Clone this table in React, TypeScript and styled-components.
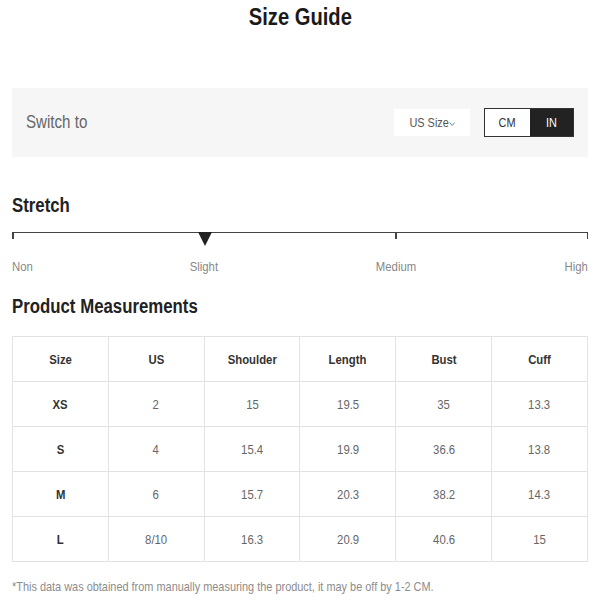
import React from "react";
import styled, { createGlobalStyle } from "styled-components";

const Global = createGlobalStyle`
  html, body { margin: 0; padding: 0; background: #fff; }
  body { font-family: "Liberation Sans", Arial, sans-serif; color: #222; }
`;

/* Narrow text: emulates the condensed face of the reference */
const Cond = styled.span<{ $origin?: string }>`
  display: inline-block;
  white-space: nowrap;
  transform: scaleX(0.84);
  transform-origin: ${(p) => p.$origin || "center"};
`;

const Page = styled.div`
  width: 576px;
  margin: 0 12px;
`;

const Title = styled.h1`
  margin: 0;
  padding-top: 4px;
  height: 88px;
  box-sizing: border-box;
  text-align: center;
  font-size: 24px;
  line-height: 26px;
  font-weight: 700;
  color: #1a1a1a;
`;

const SwitchBar = styled.div`
  height: 69px;
  background: #f6f6f6;
  display: flex;
  align-items: center;
  padding: 0 14px 0 14px;
  box-sizing: border-box;
`;

const SwitchLabel = styled.span`
  flex: 1;
  font-size: 18px;
  color: #666;
`;

const Dropdown = styled.div`
  width: 76px;
  height: 27px;
  background: #fff;
  display: flex;
  align-items: center;
  justify-content: center;
  font-size: 13px;
  color: #555;
  margin-right: 14px;
`;

const Toggle = styled.div`
  display: flex;
  height: 29px;
  border: 1px solid #333;
  box-sizing: border-box;
`;

const ToggleOption = styled.div<{ $active?: boolean }>`
  width: ${(p) => (p.$active ? 43 : 45)}px;
  display: flex;
  align-items: center;
  justify-content: center;
  font-size: 13px;
  background: ${(p) => (p.$active ? "#222" : "#fff")};
  color: ${(p) => (p.$active ? "#fff" : "#333")};
`;

const SectionTitle = styled.h2<{ $top: number }>`
  margin: ${(p) => p.$top}px 0 0;
  font-size: 20px;
  line-height: 24px;
  font-weight: 700;
  color: #222;
`;

const Scale = styled.div`
  position: relative;
  margin-top: 15px;
  height: 10px;
  border-top: 1.5px solid #444;
`;

const Tick = styled.span`
  position: absolute;
  top: 0;
  width: 1.5px;
  height: 6px;
  background: #444;
`;

const Marker = styled.svg`
  position: absolute;
  top: -1px;
  left: 186px;
`;

const ScaleLabels = styled.div`
  display: grid;
  grid-template-columns: 1fr 1fr 1fr 1fr 1fr 1fr;
  margin-top: 16px;
  font-size: 13.5px;
  color: #888;
`;

const ScaleLabel = styled.span<{ $align: "left" | "center" | "right"; $col: string }>`
  grid-column: ${(p) => p.$col};
  text-align: ${(p) => p.$align};
`;

const Table = styled.table`
  margin-top: 18px;
  width: 576px;
  border-collapse: collapse;
  table-layout: fixed;
`;

const Cell = styled.td<{ $bold?: boolean }>`
  height: 44px;
  padding: 0;
  border: 1px solid #e2e2e2;
  text-align: center;
  font-size: 13.5px;
  font-weight: ${(p) => (p.$bold ? 700 : 400)};
  color: ${(p) => (p.$bold ? "#333" : "#666")};
`;

const Note = styled.p`
  margin: 17px 0 0;
  font-size: 13px;
  color: #8c8c8c;
`;

const headers = ["Size", "US", "Shoulder", "Length", "Bust", "Cuff"];
const rows = [
  ["XS", "2", "15", "19.5", "35", "13.3"],
  ["S", "4", "15.4", "19.9", "36.6", "13.8"],
  ["M", "6", "15.7", "20.3", "38.2", "14.3"],
  ["L", "8/10", "16.3", "20.9", "40.6", "15"],
];

export default function App() {
  return (
    <Page>
      <Global />
      <Title>
        <Cond>Size Guide</Cond>
      </Title>
      <SwitchBar>
        <SwitchLabel>
          <Cond $origin="left">Switch to</Cond>
        </SwitchLabel>
        <Dropdown>
          <Cond>
            US Size
            <svg width="8" height="6" viewBox="0 0 8 6">
              <polyline points="1,1.5 4,4.5 7,1.5" fill="none" stroke="#777" strokeWidth="1" />
            </svg>
          </Cond>
        </Dropdown>
        <Toggle>
          <ToggleOption>
            <Cond>CM</Cond>
          </ToggleOption>
          <ToggleOption $active>
            <Cond>IN</Cond>
          </ToggleOption>
        </Toggle>
      </SwitchBar>

      <SectionTitle $top={36}>
        <Cond $origin="left">Stretch</Cond>
      </SectionTitle>
      <Scale>
        <Tick style={{ left: 0 }} />
        <Tick style={{ left: 383 }} />
        <Tick style={{ right: 0 }} />
        <Marker width="14" height="14" viewBox="0 0 14 14">
          <polygon points="0,0 14,0 7,14" fill="#222" />
        </Marker>
      </Scale>
      <ScaleLabels>
        <ScaleLabel $col="1" $align="left">
          <Cond $origin="left">Non</Cond>
        </ScaleLabel>
        <ScaleLabel $col="2 / 4" $align="center">
          <Cond>Slight</Cond>
        </ScaleLabel>
        <ScaleLabel $col="4 / 6" $align="center">
          <Cond>Medium</Cond>
        </ScaleLabel>
        <ScaleLabel $col="6" $align="right">
          <Cond $origin="right">High</Cond>
        </ScaleLabel>
      </ScaleLabels>

      <SectionTitle $top={20}>
        <Cond $origin="left">Product Measurements</Cond>
      </SectionTitle>
      <Table>
        <tbody>
          <tr>
            {headers.map((h) => (
              <Cell key={h} $bold>
                <Cond>{h}</Cond>
              </Cell>
            ))}
          </tr>
          {rows.map((r) => (
            <tr key={r[0]}>
              {r.map((v, i) => (
                <Cell key={i} $bold={i === 0}>
                  <Cond>{v}</Cond>
                </Cell>
              ))}
            </tr>
          ))}
        </tbody>
      </Table>
      <Note>
        <Cond $origin="left">*This data was obtained from manually measuring the product, it may be off by 1-2 CM.</Cond>
      </Note>
    </Page>
  );
}
